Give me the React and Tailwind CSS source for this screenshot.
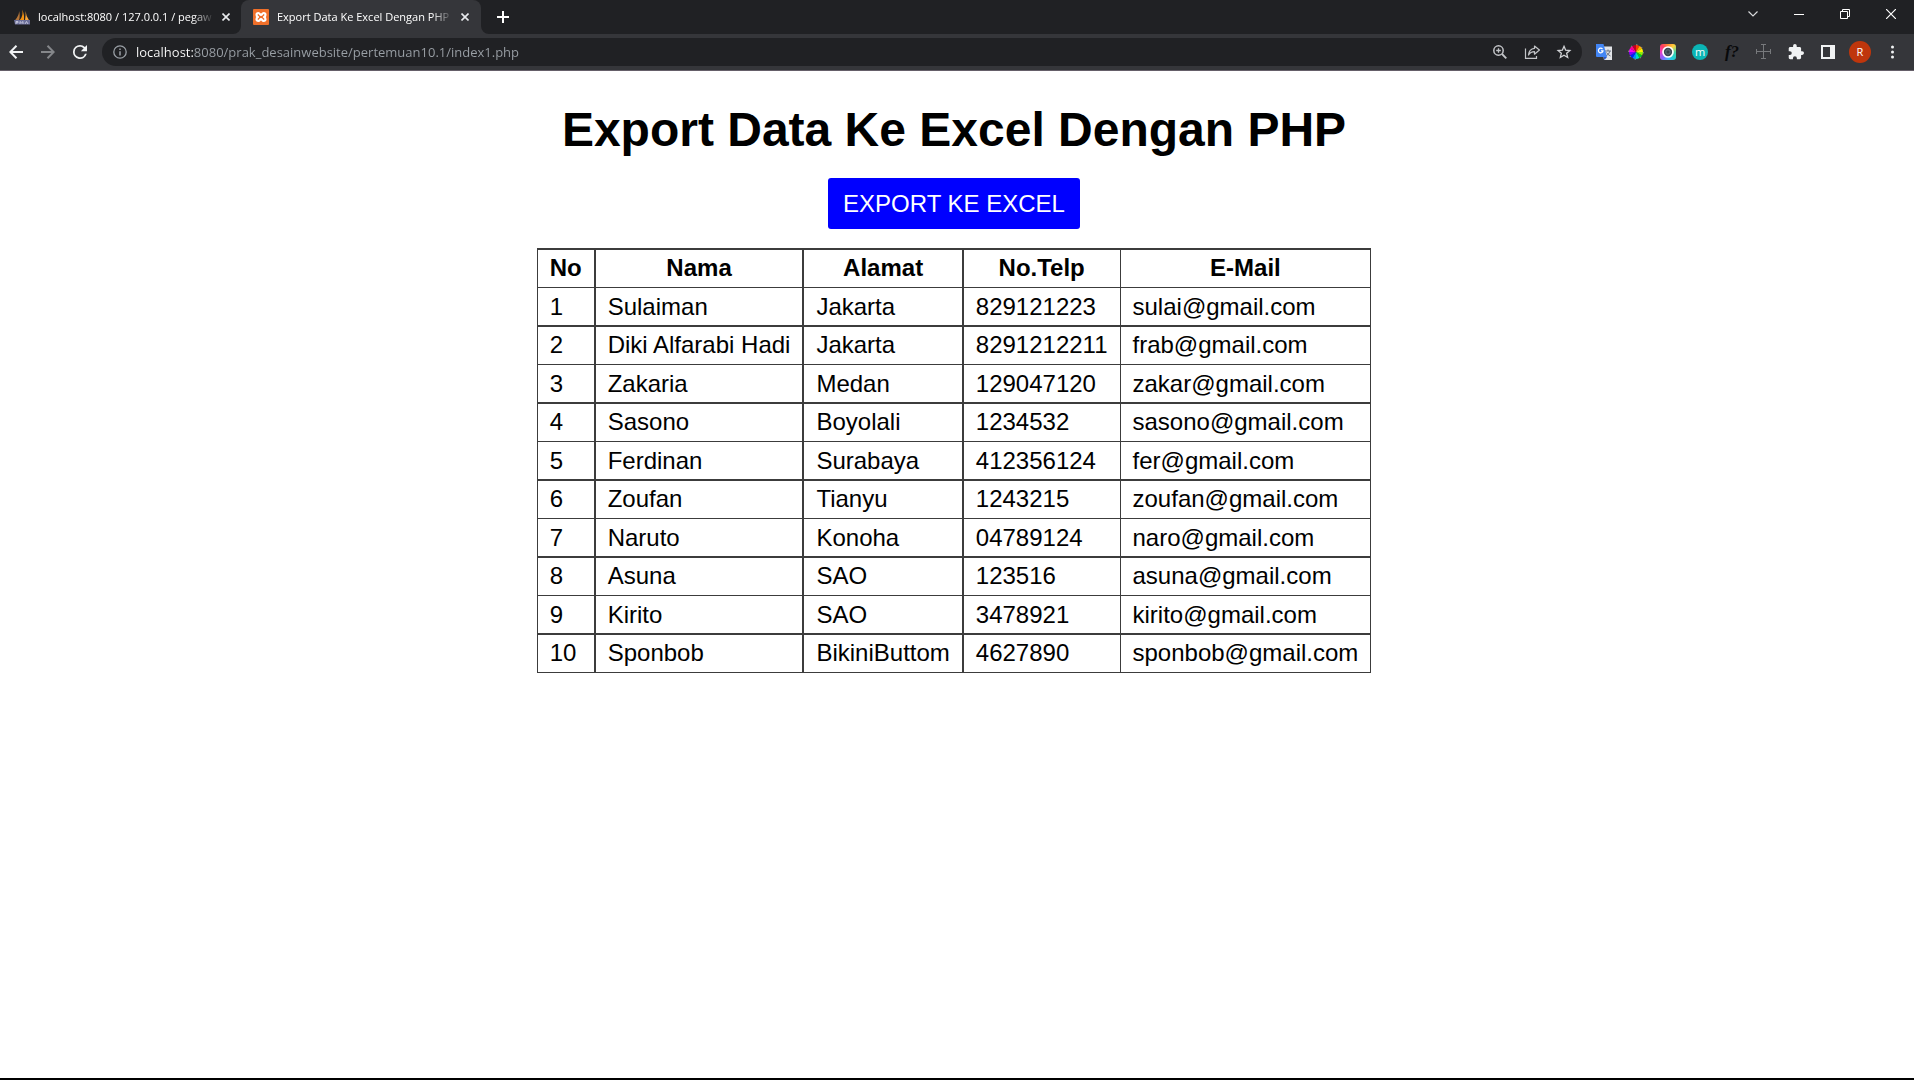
import React from "react";

const rows = [
  ["1", "Sulaiman", "Jakarta", "829121223", "sulai@gmail.com"],
  ["2", "Diki Alfarabi Hadi", "Jakarta", "8291212211", "frab@gmail.com"],
  ["3", "Zakaria", "Medan", "129047120", "zakar@gmail.com"],
  ["4", "Sasono", "Boyolali", "1234532", "sasono@gmail.com"],
  ["5", "Ferdinan", "Surabaya", "412356124", "fer@gmail.com"],
  ["6", "Zoufan", "Tianyu", "1243215", "zoufan@gmail.com"],
  ["7", "Naruto", "Konoha", "04789124", "naro@gmail.com"],
  ["8", "Asuna", "SAO", "123516", "asuna@gmail.com"],
  ["9", "Kirito", "SAO", "3478921", "kirito@gmail.com"],
  ["10", "Sponbob", "BikiniButtom", "4627890", "sponbob@gmail.com"],
];

const headings = ["No", "Nama", "Alamat", "No.Telp", "E-Mail"];
const columnBorders = ["border-l", "border-l-2", "border-l-2", "border-l-2", "border-l border-r"];

function PmaIcon() {
  return (
    <svg width="16" height="16" viewBox="0 0 16 16" className="shrink-0" aria-hidden="true">
      <path d="M5 2 Q5.500 6 .8 11.500 L5 11.500 Q6.500 6 5 2Z" fill="#b5763a" />
      <path d="M8 .5 Q10 6 5.500 11.500 L10 11.500 Q10.500 5 8 .5Z" fill="#f29111" />
      <path d="M11.500 2 Q12 7 15.200 11.500 L11 11.500 Q12 6 11.500 2Z" fill="#f7a63c" />
      <path d="M0 11 H16 V15.500 H1Z" fill="#6c6f9a" />
      <path d="M2 15 V12.500 H4 V13.800 H2 M6 15 V12.500 L7.500 13.800 L9 12.500 V15 M11 15 L12.500 12.500 L14 15" stroke="#d4d5e6" strokeWidth=".8" fill="none" />
    </svg>
  );
}

function XamppIcon() {
  return (
    <svg width="16" height="16" viewBox="0 0 16 16" className="shrink-0" aria-hidden="true">
      <rect width="16" height="16" rx="1" fill="#f0702a" />
      <path d="M5.300 4 C3 4 3 7.300 5 8 C3 8.700 3 12 5.300 12 C7 12 6.800 10 8 10 C9.200 10 9 12 10.700 12 C13 12 13 8.700 11 8 C13 7.300 13 4 10.700 4 C9 4 9.200 6 8 6 C6.800 6 7 4 5.300 4Z" fill="none" stroke="#fff" strokeWidth="2.200" strokeLinejoin="round" />
    </svg>
  );
}

function CloseIcon() {
  return (
    <svg width="8" height="8" viewBox="0 0 8 8" aria-hidden="true">
      <path d="M.5 .5 L7.500 7.500 M7.500 .5 L.5 7.500" stroke="#e8eaed" strokeWidth="1.600" />
    </svg>
  );
}

function Tab({ icon, title, active, className }) {
  return (
    <div className={"relative flex h-full items-center " + className}>
      {active && (
        <>
          <svg width="8" height="8" className="absolute bottom-0 -left-2" aria-hidden="true">
            <path d="M8 0 V8 H0 A8 8 0 0 0 8 0Z" fill="#35363a" />
          </svg>
          <svg width="8" height="8" className="absolute -right-2 bottom-0" aria-hidden="true">
            <path d="M0 0 V8 H8 A8 8 0 0 1 0 0Z" fill="#35363a" />
          </svg>
        </>
      )}
      <button className="flex min-w-0 flex-1 items-center gap-2 text-left text-[11px] leading-4 text-white">
        {icon}
        <span className="flex-1 overflow-hidden whitespace-nowrap [mask-image:linear-gradient(to_right,black_88%,transparent)]">
          {title}
        </span>
      </button>
      <button aria-label="Close tab" className="ml-1 flex size-4 shrink-0 items-center justify-center">
        <CloseIcon />
      </button>
    </div>
  );
}

function IconButton({ label, children }) {
  return (
    <button aria-label={label} className="flex h-7 w-8 shrink-0 items-center justify-center">
      {children}
    </button>
  );
}

function TabStrip() {
  return (
    <div className="flex h-[34px] bg-[#202124]">
      <Tab icon={<PmaIcon />} title="localhost:8080 / 127.0.0.1 / pegaw" className="w-[241px] pr-[7px] pl-[14px]" />
      <Tab icon={<XamppIcon />} title="Export Data Ke Excel Dengan PHP" active className="w-[240px] rounded-t-lg bg-[#35363a] pr-2 pl-3" />
      <button aria-label="New tab" className="ml-2 flex w-7 items-center justify-center">
        <svg width="12" height="12" aria-hidden="true">
          <path d="M6 0 V12 M0 6 H12" stroke="#fff" strokeWidth="2" />
        </svg>
      </button>
      <div className="ml-auto flex h-7">
        <button aria-label="Search tabs" className="flex w-[46px] items-center justify-center">
          <svg width="10" height="6" fill="none" stroke="#d8dadc" strokeWidth="1.200" aria-hidden="true"><path d="M.5 .5 L5 5 L9.500 .5" /></svg>
        </button>
        <button aria-label="Minimize" className="flex w-[46px] items-center justify-center">
          <svg width="10" height="1" aria-hidden="true"><rect width="10" height="1" fill="#fff" /></svg>
        </button>
        <button aria-label="Restore" className="flex w-[46px] items-center justify-center">
          <svg width="10" height="10" fill="none" stroke="#fff" aria-hidden="true">
            <path d="M.5 2.500 H7.500 V9.500 H.5Z M2.500 2.500 V.5 H9.500 V7.500 H7.500" />
          </svg>
        </button>
        <button aria-label="Close window" className="flex w-[46px] items-center justify-center">
          <svg width="10" height="10" stroke="#fff" aria-hidden="true"><path d="M0 0 L10 10 M10 0 L0 10" strokeWidth="1.200" /></svg>
        </button>
      </div>
    </div>
  );
}

const wheel = ["#ff3a00", "#ffb000", "#fff000", "#8df000", "#00d020", "#00e0c0", "#0090ff", "#0020ff", "#8000ff", "#ff00f0", "#ff0090", "#c00020"];

function WheelIcon() {
  const point = (i) => {
    const a = (i / wheel.length) * Math.PI * 2 - Math.PI / 2;
    return `${8 + 7 * Math.cos(a)} ${8 + 7 * Math.sin(a)}`;
  };
  return (
    <svg width="16" height="16" aria-hidden="true">
      {wheel.map((c, i) => (
        <path key={c} d={`M8 8 L${point(i)} A7 7 0 0 1 ${point(i + 1)}Z`} fill={c} />
      ))}
      <circle cx="8" cy="8" r="7.300" fill="none" stroke="#aaa" strokeWidth=".8" strokeDasharray="1.500 4.200" />
    </svg>
  );
}

function Toolbar() {
  return (
    <div className="flex h-[37px] items-center border-b border-[#655f69] bg-[#35363a] pr-1.5">
      <IconButton label="Back">
        <svg width="14" height="14" fill="none" stroke="#f1f3f4" strokeWidth="2" aria-hidden="true"><path d="M14 7 H1.500 M7.500 .8 L1.300 7 L7.500 13.200" /></svg>
      </IconButton>
      <IconButton label="Forward">
        <svg width="14" height="14" fill="none" stroke="#85878a" strokeWidth="2" aria-hidden="true"><path d="M0 7 H12.500 M6.500 .8 L12.700 7 L6.500 13.200" /></svg>
      </IconButton>
      <IconButton label="Reload">
        <svg width="14" height="14" viewBox="4 4 16 16" fill="#f1f3f4" aria-hidden="true">
          <path d="M17.650 6.350A7.960 7.960 0 0 0 12 4a8 8 0 1 0 7.730 10h-2.080A6 6 0 1 1 12 6c1.660 0 3.140.69 4.220 1.780L13 11h7V4z" />
        </svg>
      </IconButton>
      <div className="mr-1.5 ml-1.5 flex h-7 flex-1 items-center rounded-full bg-[#202124] pr-0.5 pl-[11px]">
        <button aria-label="Site information" className="mr-[9px] shrink-0">
          <svg width="14" height="14" fill="none" stroke="#9aa0a6" strokeWidth="1.300" aria-hidden="true">
            <circle cx="7" cy="7" r="6.200" />
            <path d="M7 6.200 V10.500 M7 3.500 V5" strokeWidth="1.500" />
          </svg>
        </button>
        <input
          aria-label="Address"
          defaultValue="localhost:8080/prak_desainwebsite/pertemuan10.1/index1.php"
          className="min-w-0 flex-1 bg-[linear-gradient(to_right,#ffffff_57px,#9aa0a6_57px)] bg-clip-text text-[13px] leading-5 text-transparent outline-none"
        />
        <IconButton label="Zoom">
          <svg width="14" height="14" fill="none" stroke="#c3c5c8" strokeWidth="1.500" aria-hidden="true">
            <circle cx="5.500" cy="5.500" r="4.700" /><path d="M9 9 L13.300 13.300" strokeWidth="1.800" /><path d="M5.500 3.200 V7.800 M3.200 5.500 H7.800" strokeWidth="1.300" />
          </svg>
        </IconButton>
        <IconButton label="Share">
          <svg width="16" height="14" viewBox="0 0 16 14" fill="none" stroke="#c3c5c8" strokeWidth="1.200" aria-hidden="true">
            <path d="M1.500 3.500 V13.400 H12.500 V11" /><path d="M10.500 1 L15.400 5 L10.500 9.200 V6.700 C7.500 6.700 5.800 7.800 4.500 10 C4.800 6.300 6.800 3.700 10.500 3.300Z" strokeLinejoin="round" />
          </svg>
        </IconButton>
        <IconButton label="Bookmark">
          <svg width="16" height="16" viewBox="0 0 24 24" fill="none" stroke="#d0d2d5" strokeWidth="2" aria-hidden="true">
            <path d="M12 3.500 L14.500 9.300 L20.800 9.900 L16 14 L17.500 20.200 L12 16.900 L6.500 20.200 L8 14 L3.200 9.900 L9.500 9.300Z" />
          </svg>
        </IconButton>
      </div>
      <IconButton label="Translate">
        <svg width="16" height="16" aria-hidden="true">
          <path d="M6 2.500 H16 V16 H8Z" fill="#e2e4e8" />
          <path d="M9 7 H15 M12 5.500 V7 M14 7 Q13 11 9.500 12 M10.500 8.500 Q12 11 14.500 12" stroke="#6b7280" fill="none" />
          <path d="M0 0 H7.500 L11 13 H1 Q0 13 0 12Z" fill="#4285f4" />
          <path d="M7.500 13 H11 L8.500 16Z" fill="#2a56c6" />
          <path d="M6.500 5 A2.300 2.300 0 1 0 7 6.800 H5" stroke="#fff" strokeWidth="1.200" fill="none" />
        </svg>
      </IconButton>
      <IconButton label="Color picker"><WheelIcon /></IconButton>
      <IconButton label="Screen capture">
        <span className="flex size-4 items-center justify-center rounded-[3px] bg-[conic-gradient(from_0deg,#ff8a30,#ffd23c_12%,#42d0a0_25%,#20cfd8_40%,#42b8ff_50%,#8a60ff_62%,#f03cc8_75%,#ff3c60_88%,#ff8a30)]">
          <svg width="14" height="14" aria-hidden="true">
            <circle cx="7" cy="7" r="5" fill="#3c4650" stroke="#fff" strokeWidth="1.700" /><circle cx="7" cy="7" r="2.200" fill="#35424c" stroke="#607080" />
          </svg>
        </span>
      </IconButton>
      <IconButton label="Extension m">
        <span className="flex size-4 items-center justify-center rounded-full bg-[#0bb5b5] text-[11px] leading-3 text-white">m</span>
      </IconButton>
      <IconButton label="Font finder">
        <span className="font-['Liberation_Serif',serif] text-[17px] leading-4 font-bold text-[#08090a] italic">f?</span>
      </IconButton>
      <IconButton label="Page ruler">
        <svg width="16" height="16" stroke="#77797c" fill="none" aria-hidden="true">
          <path d="M7.500 1 V15 M1 7.500 H15 M5 .5 H10 M5 14.500 H10 M.5 5 V10 M14.500 5 V10" />
        </svg>
      </IconButton>
      <IconButton label="Extensions">
        <svg width="16" height="16" viewBox="1 1 22 22" fill="#f1f3f4" aria-hidden="true">
          <path d="M20.500 11H19V7c0-1.100-.9-2-2-2h-4V3.500a2.500 2.500 0 0 0-5 0V5H4c-1.100 0-2 .9-2 2v3.800h1.500a2.700 2.700 0 0 1 0 5.400H2V20c0 1.100.9 2 2 2h3.800v-1.500a2.700 2.700 0 0 1 5.400 0V22H17c1.100 0 2-.9 2-2v-4h1.500a2.500 2.500 0 0 0 0-5z" />
        </svg>
      </IconButton>
      <IconButton label="Side panel">
        <svg width="14" height="14" aria-hidden="true"><path d="M0 0 H14 V14 H0Z M2 2 V12 H9 V2Z" fill="#f1f3f4" fillRule="evenodd" /></svg>
      </IconButton>
      <IconButton label="Profile">
        <span className="flex size-[22px] items-center justify-center rounded-full bg-[#bf360c] text-[11px] leading-4 text-white">R</span>
      </IconButton>
      <IconButton label="Menu">
        <svg width="4" height="14" fill="#f1f3f4" aria-hidden="true"><circle cx="2.500" cy="2" r="1.500" /><circle cx="2.500" cy="7" r="1.500" /><circle cx="2.500" cy="12" r="1.500" /></svg>
      </IconButton>
    </div>
  );
}

export default function App() {
  return (
    <div className="flex min-h-screen flex-col border-b-2 border-black bg-white">
      <header className="font-['Open_Sans','Noto_Sans',sans-serif]">
        <TabStrip />
        <Toolbar />
      </header>
      <main className="flex flex-1 flex-col items-center pt-[31px] pr-1.5 font-['Liberation_Sans',Arial,sans-serif] text-2xl text-black">
        <h1 className="text-5xl leading-[56px] font-bold">Export Data Ke Excel Dengan PHP</h1>
        <a href="#export" className="mt-5 rounded-[3px] bg-[#0000ff] px-[15px] py-3 leading-[27px] text-white">
          EXPORT KE EXCEL
        </a>
        <table className="mt-[19px] border-separate border-spacing-0 border-b border-[#3c3c3c]">
          <thead>
            <tr>
              {headings.map((h, i) => (
                <th key={h} className={"border-t-2 border-[#3c3c3c] px-3 pt-1 pb-1.5 leading-[27px] font-bold " + columnBorders[i]}>{h}</th>
              ))}
            </tr>
          </thead>
          <tbody>
            {rows.map((row, r) => (
              <tr key={row[0]}>
                {row.map((cell, i) => (
                  <td key={headings[i]} className={"border-[#3c3c3c] px-3 leading-[27px] " + (r % 2 ? "border-t-2 pt-1 pb-1.5 " : "border-t py-[5px] ") + columnBorders[i]}>
                    {cell}
                  </td>
                ))}
              </tr>
            ))}
          </tbody>
        </table>
      </main>
    </div>
  );
}
